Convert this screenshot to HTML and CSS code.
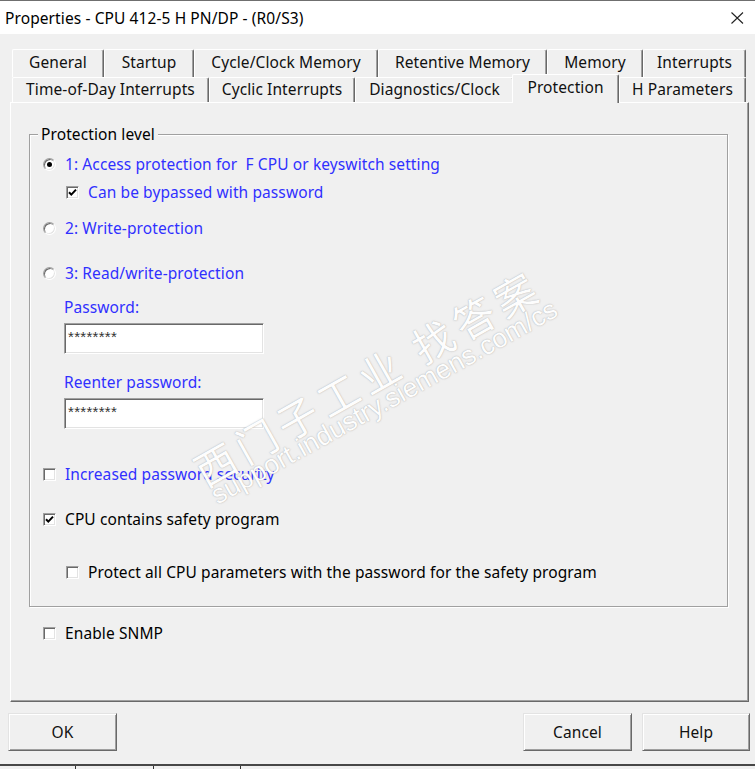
FILE: index.html
```html
<!DOCTYPE html>
<html>
<head>
<meta charset="utf-8">
<link rel="stylesheet" href="styles.css">
</head>
<body>
<div class="window">
  <div class="titlebar">
    <span class="title">Properties - CPU 412-5 H PN/DP - (R0/S3)</span>
    <svg class="close" width="13" height="12" viewBox="0 0 13 12"><path d="M0.5 0.5L12 11.5M12 0.5L0.5 11.5" stroke="#222" stroke-width="1.1" fill="none"/></svg>
  </div>
  <div class="body">
    <div class="tabs">
      <div class="tabrow back">
        <div class="tab w-general">General</div>
        <div class="tab w-startup">Startup</div>
        <div class="tab w-cycle">Cycle/Clock Memory</div>
        <div class="tab w-retentive">Retentive Memory</div>
        <div class="tab w-memory">Memory</div>
        <div class="tab w-interrupts">Interrupts</div>
      </div>
      <div class="tabrow front">
        <div class="tab w-tod">Time-of-Day Interrupts</div>
        <div class="tab w-cyclic">Cyclic Interrupts</div>
        <div class="tab w-diag">Diagnostics/Clock</div>
        <div class="tab w-prot selected">Protection</div>
        <div class="tab w-hpar">H Parameters</div>
      </div>
    </div>
    <div class="panel">
      <div class="group">
        <span class="legend">Protection level</span>
        <div class="row r1"><span class="radio checked"><span class="dot"></span></span><span class="label blue">1: Access protection for&nbsp; F CPU or keyswitch setting</span></div>
        <div class="row r-c1 indent"><span class="check checked"><svg width="11" height="11" viewBox="0 0 11 11"><path d="M2 5.2L4.3 7.6L9 2.6" stroke="#000" stroke-width="2" fill="none"/></svg></span><span class="label blue">Can be bypassed with password</span></div>
        <div class="row r2"><span class="radio"></span><span class="label blue">2: Write-protection</span></div>
        <div class="row r3"><span class="radio"></span><span class="label blue">3: Read/write-protection</span></div>
        <div class="field-label pw1 blue">Password:</div>
        <div class="input in1"><span class="stars">********</span></div>
        <div class="field-label pw2 blue">Reenter password:</div>
        <div class="input in2"><span class="stars">********</span></div>
        <div class="row r-inc"><span class="check"></span><span class="label blue">Increased password security</span></div>
        <div class="row r-cpu"><span class="check checked"><svg width="11" height="11" viewBox="0 0 11 11"><path d="M2 5.2L4.3 7.6L9 2.6" stroke="#000" stroke-width="2" fill="none"/></svg></span><span class="label">CPU contains safety program</span></div>
        <div class="row r-prot indent"><span class="check"></span><span class="label">Protect all CPU parameters with the password for the safety program</span></div>
      </div>
      <div class="row r-snmp"><span class="check"></span><span class="label">Enable SNMP</span></div>
    </div>
    <div class="buttons">
      <div class="btn btn-ok">OK</div>
      <div class="spacer"></div>
      <div class="btn btn-cancel">Cancel</div>
      <div class="btn btn-help">Help</div>
    </div>
    <div class="statusbar">
      <div class="cell c1"></div>
      <div class="cell c2"></div>
      <div class="cell c3"></div>
      <div class="cell c4"></div>
    </div>
  </div>
  <div class="wm wm-cn">西门子工业&nbsp;找答案</div>
  <div class="wm wm-url">support.industry.siemens.com/cs</div>
</div>
</body>
</html>
```
FILE: styles.css
```css
html, body {
  margin: 0;
  padding: 0;
}
body {
  width: 755px;
  height: 769px;
  overflow: hidden;
  background: #f0f0f0;
  font-family: "Noto Sans", "Noto Sans CJK SC", sans-serif;
  font-size: 15.5px;
  letter-spacing: 0.1px;
  color: #000;
}
.window {
  position: relative;
  width: 755px;
  height: 769px;
  overflow: hidden;
}
.titlebar {
  height: 33px;
  border-top: 1px solid #6f6f6f;
  background: #fff;
  display: flex;
  align-items: center;
  justify-content: space-between;
  padding: 0 11px 0 5px;
}
.title {
  color: #000;
  line-height: 20px;
}
.close {
  display: block;
  margin-top: 1px;
}
.body {
  padding-top: 15px;
  background: #f0f0f0;
}
.tabs {
  padding-left: 12px;
}
.tabrow {
  display: flex;
  align-items: flex-start;
}
.tabrow.back {
  height: 28px;
}
.tabrow.front {
  height: 25px;
}
.tab {
  box-sizing: border-box;
  border-top: 1px solid #fff;
  border-left: 1px solid #fff;
  border-right: 1px solid #696969;
  box-shadow: inset -1px 0 0 #a0a0a0;
  border-radius: 2px 2px 0 0;
  text-align: center;
  color: #111;
  background: #f0f0f0;
  white-space: nowrap;
}
.back .tab {
  height: 28px;
  line-height: 25px;
}
.front .tab {
  height: 25px;
  line-height: 23px;
}
.front .tab.selected {
  position: relative;
  z-index: 2;
  height: 29px;
  margin-top: -3px;
  line-height: 24px;
}
.w-general { width: 92px; }
.w-startup { width: 90px; }
.w-cycle { width: 184px; }
.w-retentive { width: 169px; }
.w-memory { width: 96px; }
.w-interrupts { width: 103px; }
.w-tod { width: 197px; }
.w-cyclic { width: 146px; }
.w-diag { width: 159px; }
.w-prot { width: 107px; margin-left: -2px; }
.w-hpar { width: 127px; }

.panel {
  box-sizing: border-box;
  margin-left: 10px;
  width: 739px;
  height: 600px;
  border-top: 1px solid #fff;
  border-left: 1px solid #fff;
  border-right: 1px solid #696969;
  border-bottom: 1px solid #696969;
  box-shadow: inset -1px -1px 0 #a0a0a0;
  padding-top: 31px;
}
.group {
  position: relative;
  box-sizing: border-box;
  margin-left: 18px;
  width: 699px;
  border: 1px solid #a0a0a0;
  box-shadow: inset 1px 1px 0 #fff, 1px 1px 0 #fff;
  padding: 18px 0 23px 0;
}
.legend {
  position: absolute;
  left: 8px;
  top: -11px;
  line-height: 20px;
  padding: 0 3px;
  background: #f0f0f0;
}
.row {
  display: flex;
  align-items: center;
  height: 22px;
  padding-left: 13px;
}
.row.indent {
  padding-left: 36px;
}
.label {
  margin-left: 9px;
  white-space: nowrap;
}
.blue {
  color: #3030ff;
}
.r-c1 { margin-top: 6px; }
.r2 { margin-top: 14px; }
.r3 { margin-top: 23px; }
.r-inc { margin-top: 34px; }
.r-cpu { margin-top: 23px; }
.r-prot { margin-top: 31px; }
.r-snmp { margin-top: 15px; padding-left: 32px; }

.radio {
  box-sizing: border-box;
  width: 13px;
  height: 13px;
  border-radius: 50%;
  border: 1px solid;
  border-color: #a0a0a0 #fff #fff #a0a0a0;
  box-shadow: inset 1px 1px 0 #696969, inset -1px -1px 0 #e3e3e3;
  background: #fff;
  display: flex;
  align-items: center;
  justify-content: center;
  flex: none;
}
.dot {
  width: 5px;
  height: 5px;
  border-radius: 50%;
  background: #000;
}
.check {
  box-sizing: border-box;
  width: 13px;
  height: 13px;
  border: 1px solid;
  border-color: #a0a0a0 #fff #fff #a0a0a0;
  box-shadow: inset 1px 1px 0 #696969, inset -1px -1px 0 #e3e3e3;
  background: #fff;
  display: flex;
  align-items: center;
  justify-content: center;
  flex: none;
}
.check svg {
  display: block;
}
.field-label {
  height: 22px;
  line-height: 22px;
  padding-left: 34px;
}
.pw1 { margin-top: 12px; }
.pw2 { margin-top: 17px; }
.input {
  box-sizing: border-box;
  margin-left: 34px;
  margin-top: 5px;
  width: 200px;
  height: 31px;
  background: #fff;
  border: 1px solid;
  border-color: #a0a0a0 #fff #fff #a0a0a0;
  box-shadow: inset 1px 1px 0 #696969, inset -1px -1px 0 #e3e3e3;
  padding: 6px 0 0 3px;
}
.stars {
  font-family: "Liberation Sans", sans-serif;
  font-size: 15px;
  letter-spacing: 0.3px;
  color: #333;
  line-height: 14px;
  display: block;
}

.buttons {
  display: flex;
  margin-top: 11px;
  padding: 0 5px 0 8px;
  height: 38px;
}
.spacer {
  flex: 1;
}
.btn {
  box-sizing: border-box;
  height: 38px;
  border: 1px solid;
  border-color: #e3e3e3 #696969 #696969 #e3e3e3;
  box-shadow: inset 1px 1px 0 #fff, inset -1px -1px 0 #a0a0a0;
  display: flex;
  align-items: center;
  justify-content: center;
  color: #111;
}
.btn-ok { width: 109px; }
.btn-cancel { width: 109px; }
.btn-help { width: 108px; margin-left: 10px; }

.statusbar {
  margin-top: 13px;
  border-top: 2px solid #474747;
  height: 10px;
  display: flex;
}
.cell {
  height: 10px;
  box-sizing: border-box;
}
.c1 { width: 75px; }
.c2 { width: 78px; border-left: 1px solid #333; }
.c3 { width: 87px; border-left: 1px solid #333; }
.c4 { flex: 1; border-left: 1px solid #333; }

.wm {
  position: absolute;
  white-space: nowrap;
  color: #fdfdfd;
  text-shadow: 0 0 1px rgba(120, 120, 120, 0.55), 0 0 2px rgba(160, 160, 160, 0.35);
  transform-origin: 0 100%;
  pointer-events: none;
  letter-spacing: 0;
}
.wm-cn {
  left: 207px;
  top: 450px;
  font-family: "Noto Sans CJK SC", sans-serif;
  font-size: 41px;
  line-height: 41px;
  letter-spacing: 6px;
  transform: rotate(-29.5deg);
}
.wm-url {
  left: 220px;
  top: 482px;
  font-family: "Liberation Sans", sans-serif;
  font-size: 27px;
  line-height: 27px;
  transform: rotate(-29deg);
}
```
